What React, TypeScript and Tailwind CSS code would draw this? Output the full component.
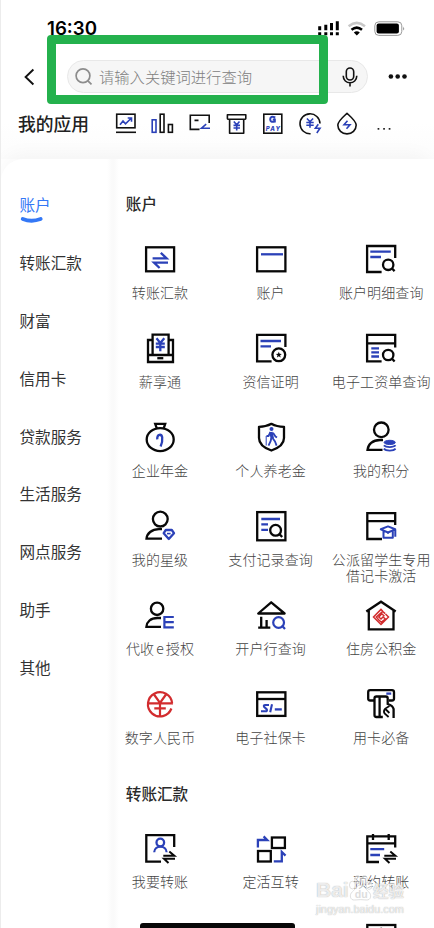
import React from 'react';

const BLUE = '#2b41b8';
const RED = '#d22c2e';

type IconProps = { children: React.ReactNode };

function Glyph({ children }: IconProps) {
  return (
    <svg className="block h-9 w-9 shrink-0 overflow-visible" viewBox="0 0 36 36" fill="none" stroke="#080808" strokeWidth="2.3">
      {children}
    </svg>
  );
}

function SmallGlyph({ children }: IconProps) {
  return (
    <svg className="block h-6 w-6 shrink-0 overflow-visible" viewBox="0 0 24 24" fill="none" stroke="#111" strokeWidth="1.6">
      {children}
    </svg>
  );
}

const Swap = () => (
  <g strokeWidth="2">
    <path d="M21.3 24.7H32.3L27.3 20.6M33 27.7H22L26.5 32" />
  </g>
);

const icons: Record<string, React.ReactNode> = {
  transfer: (
    <>
      <rect x="4.1" y="5.3" width="28" height="24" />
      <path stroke={BLUE} d="M10.6 16.3H24.6L18.8 10.8M26 20.6H12L17.6 26" />
    </>
  ),
  account: (
    <>
      <rect x="4.1" y="5.3" width="28.3" height="24" />
      <path stroke={BLUE} d="M8 12.3H30" />
    </>
  ),
  detail: (
    <>
      <path d="M32.2 16V4H4.1V30H18.6" />
      <path stroke={BLUE} d="M7.3 9.7H27.8M7.3 15H18" />
      <circle cx="25.2" cy="22.8" r="5.2" />
      <path d="M28.8 26.3L31.6 29.1" />
    </>
  ),
  salary: (
    <>
      <path d="M10.6 23.5V3.7H26.6V23.5M10 9H6V31H31V9H27M6 24H31" />
      <path d="M15.3 27.2H21.3" />
      <path stroke={BLUE} d="M14.5 7.2L18.3 12L22.3 7.2M13.8 12.6H22.8M13.8 16H22.8M18.3 12V20.3" />
    </>
  ),
  credit: (
    <>
      <path d="M32.4 16V3.8H4.1V30.3H18.6" />
      <path stroke={BLUE} d="M7.5 10H28M7.5 15.3H18" />
      <circle cx="25.8" cy="23.8" r="6.4" />
      <path fill="#080808" stroke="none" d="M25.8 20.8L26.6 22.8L28.8 22.9L27.1 24.3L27.7 26.5L25.8 25.2L23.9 26.5L24.5 24.3L22.8 22.9L25 22.8Z" />
    </>
  ),
  payslip: (
    <>
      <path d="M32.2 16.5V3.8H4.1V30.3H18.6M4 12.4H32.5" />
      <path stroke={BLUE} d="M8.3 17.4H16M8.3 21.4H16M8.3 25.5H16" />
      <circle cx="25.2" cy="24" r="5.2" />
      <path d="M28.8 27.5L31.6 30.5" />
    </>
  ),
  annuity: (
    <>
      <path d="M14.8 8.3L13.2 3.8H23.2L21.7 8.3" />
      <ellipse cx="18.2" cy="19.6" rx="13.5" ry="11.5" />
      <path stroke={BLUE} strokeWidth="2.3" d="M15.2 19.4C15 13.5 19.5 13.8 20.2 17.3C20.6 20.6 20.2 23 18.6 26.5" />
    </>
  ),
  pension: (
    <>
      <path strokeLinejoin="round" d="M18.4 3.8C14.5 6 10.5 6.8 6 6.8V18C6 25.5 13.5 28.8 18.4 30.5C23.3 28.8 31 25.5 31 18V6.8C26.5 6.8 22.3 6 18.4 3.8Z" />
      <circle cx="18.5" cy="9" r="2" fill={BLUE} stroke="none" />
      <path stroke={BLUE} strokeWidth="3.4" d="M18 12L19.3 18.5" />
      <path stroke={BLUE} strokeWidth="1.8" d="M17.5 12L15.5 16H13.5M20 12.8L22.5 16.5L24 17.5M18.3 18L17.7 21L15.5 25.6M19.5 18L22 21.5L23.6 25.6" />
      <path stroke={BLUE} strokeWidth="1" d="M13.2 25.5V16" />
    </>
  ),
  points: (
    <>
      <circle cx="18.3" cy="9.8" r="7.3" />
      <path d="M20 20H17C9.5 20 5 24.5 4.5 29.8H19.5" />
      <ellipse cx="26.7" cy="22.4" rx="5.6" ry="2.1" fill={BLUE} stroke={BLUE} strokeWidth="1" />
      <path stroke={BLUE} strokeWidth="1.7" d="M20.8 25.3C23 27.6 30.5 27.6 32.6 25.3M20.8 28.6C23 31.2 30.5 31.2 32.6 28.6" />
    </>
  ),
  star: (
    <>
      <circle cx="18.3" cy="10.1" r="7.4" />
      <path d="M20 20.2H17C9.5 20.2 5 24.5 4.5 29.6H20" />
      <path stroke={BLUE} strokeLinejoin="round" d="M23.8 21H29.8L32 24.2L26.8 30L21.7 24.2Z" />
      <path stroke={BLUE} strokeWidth="1.6" d="M25 24.6H28.6" />
    </>
  ),
  payments: (
    <>
      <rect x="4.2" y="3.1" width="28.2" height="28.2" />
      <path stroke={BLUE} d="M8.3 10H27M8.3 15.4H15M8.3 20.8H15" />
      <circle cx="22.6" cy="21.3" r="5.4" />
      <path d="M26.2 24.9L29.2 28" />
    </>
  ),
  student: (
    <>
      <path d="M32.2 16V4.2H4.3V30H19M4.3 12.2H32.2" />
      <path stroke={BLUE} strokeWidth="2" strokeLinejoin="round" d="M17.8 20.3L25 17.4L32.2 20.3L25 23.5ZM20.5 22V28.8H29.8V22M32.3 20.5V27.8" />
      <path stroke={BLUE} strokeWidth="1.2" d="M25 23.5V25" />
    </>
  ),
  authorize: (
    <>
      <circle cx="15.1" cy="10.8" r="6.2" />
      <path d="M19 20H15.5C8.5 20 4.8 24 4.4 28.8H19" />
      <path stroke={BLUE} strokeWidth="2.2" d="M31.8 19H22.4V29.4H31.8M22.4 24.2H31.8" />
    </>
  ),
  branch: (
    <>
      <path strokeLinejoin="round" d="M18.2 4.3L31.6 15.5H5.2Z" />
      <path d="M8.2 18.7V29.6M13.6 22V29.6M5.2 29.6H17.3" />
      <circle cx="25.6" cy="24.5" r="5.4" stroke={BLUE} strokeWidth="2.2" />
      <path stroke={BLUE} strokeWidth="2.2" d="M28.8 27.6L32 31" />
    </>
  ),
  housing: (
    <>
      <path d="M3.3 13.5L18 3.7L32.7 13.5M5.8 12V31.3H30.5V12" />
      <path stroke={RED} strokeWidth="1.5" d="M19.8 13.2L18 11.4L10.5 19L18 26.5L25.5 19L22.5 16M22.2 15.6L19.6 13.4L13.3 19L15 20.8M21.5 18.2L18.8 15.8L15.8 19L18 21L20 19L22.4 21L18.4 24.2L14.8 21" />
    </>
  ),
  digital: (
    <path stroke={RED} strokeWidth="2.2" d="M30.1 16.3A12.1 12.1 0 1 0 29.4 21.5M5.8 16.3H31M12 7.5L18 15.8L24 7.5M18 16V29M12.3 21.4H23.8" />
  ),
  social: (
    <>
      <rect x="4.2" y="5.3" width="28.2" height="23.6" />
      <path d="M4 12H32.5" />
      <path stroke={BLUE} d="M21.8 22.4H28.8" />
      <path stroke={BLUE} strokeWidth="2.1" d="M16 18H12.2Q10.4 18 11 19.7L13.8 22.4Q14.5 24.3 12.4 24.3H8M19 17.2L17.2 25.2" />
    </>
  ),
  cards: (
    <>
      <path strokeLinejoin="round" d="M11 13.5H7.2Q5.2 13.5 5.2 11.5V5.2Q5.2 3.2 7.2 3.2H29Q31 3.2 31 5.2V11.5Q31 13.5 29 13.5H26" />
      <path d="M19.8 30H13.4Q11.5 30 11.5 28V11.5Q11.5 9.5 13.4 9.5H22.8Q24.7 9.5 24.7 11.5V17Q29.8 18.5 30.6 22V31M16.6 9V30" />
      <path d="M26.5 19L22.3 21.6Q20 24 21.6 26.4L25.6 30M22.4 22L26.4 26" strokeWidth="1.8" />
      <path stroke={BLUE} d="M23.3 6.6H28.2" />
    </>
  ),
  send: (
    <>
      <path d="M32.2 16V4.2H4.3V30.6H19" />
      <circle cx="18.3" cy="11.5" r="3.8" stroke={BLUE} />
      <path stroke={BLUE} strokeWidth="2.2" d="M12.2 21.3C12.4 13.8 24.4 13.8 24.6 21.3" />
      <Swap />
    </>
  ),
  convert: (
    <>
      <rect x="18.9" y="6.5" width="13" height="10.5" />
      <rect x="5" y="20" width="12.8" height="10.5" />
      <path stroke={BLUE} d="M4.9 16.5V9H14.2L10.6 5.4M20.8 30.4H28.8V21L32.5 24.6" />
    </>
  ),
  schedule: (
    <>
      <path d="M32.2 16.5V5.3H4.3V31H16M4.3 12.3H32.2M10 3V9M25.7 3V9" />
      <path stroke={BLUE} d="M7.3 18.2H21.2M7.3 24H17" />
      <Swap />
    </>
  ),
  next: (
    <>
      <rect x="4.3" y="5" width="28" height="24" />
      <path d="M16 9.5L18.2 7.8L20.4 9.5" strokeWidth="1.2" stroke="#999" />
    </>
  ),
};

const accountItems: [string, React.ReactNode][] = [
  ['transfer', '转账汇款'], ['account', '账户'], ['detail', '账户明细查询'],
  ['salary', '薪享通'], ['credit', '资信证明'], ['payslip', '电子工资单查询'],
  ['annuity', '企业年金'], ['pension', '个人养老金'], ['points', '我的积分'],
  ['star', '我的星级'], ['payments', '支付记录查询'], ['student', '公派留学生专用\n借记卡激活'],
  ['authorize', <>代收<span className="mr-0.5 ml-[2px]">e</span>授权</>], ['branch', '开户行查询'], ['housing', '住房公积金'],
  ['digital', '数字人民币'], ['social', '电子社保卡'], ['cards', '用卡必备'],
];

const transferItems: [string, React.ReactNode][] = [
  ['send', '我要转账'], ['convert', '定活互转'], ['schedule', '预约转账'],
  ['', ''], ['', ''], ['next', ''],
];

const categories = ['账户', '转账汇款', '财富', '信用卡', '贷款服务', '生活服务', '网点服务', '助手', '其他'];

function ServiceGrid({ items }: { items: [string, React.ReactNode][] }) {
  return (
    <div className="-ml-[0.3px] grid w-[331.8px] auto-rows-[89px] grid-cols-3">
      {items.map(([icon, label], i) => (
        <div key={i} className="flex flex-col items-center gap-1.5">
          <Glyph>{icons[icon]}</Glyph>
          <span className="text-center text-[14px] leading-4 font-light tracking-[0.1px] whitespace-pre text-[#444]">{label}</span>
        </div>
      ))}
    </div>
  );
}

function StatusBar() {
  return (
    <div className="flex h-[60px] items-start justify-between pt-[18px] pr-[29px] pl-[47px]">
      <span className="font-['Inter'] text-[18.7px] leading-[22px] font-semibold text-black">16:30</span>
      <svg className="mt-[3px] h-[15px] w-[87px]" viewBox="318 21 87 15" fill="#000">
        <path d="M318.2 26.3h3v3.9h-3zM324.3 24.7h3v5.5h-3zM330 23h3v7.2h-3zM335.8 21.2h3v9h-3zM318.2 32.3h3v3h-3zM324.3 32.3h3v3h-3zM330 32.3h3v3h-3zM335.8 32.3h3v3h-3z" />
        <path d="M348.6 26.2Q356.8 19.6 365 26.2" fill="none" stroke="#c8c8c8" strokeWidth="2.5" />
        <path d="M351.5 29.8Q356.8 25.4 362 29.8" fill="none" stroke="#000" strokeWidth="2.5" />
        <path d="M353.8 32.4Q356.8 30 359.8 32.4L356.8 35.4Z" />
        <rect x="374.8" y="21.8" width="27" height="13.6" rx="4" fill="none" stroke="#999" />
        <rect x="376.6" y="23.6" width="22.3" height="10" rx="2" />
        <path d="M403.2 26.5Q405 28.5 403.2 30.5Z" fill="#888" />
      </svg>
    </div>
  );
}

function SearchRow() {
  return (
    <div className="flex h-[33px] items-center pr-[26px] pl-6">
      <svg className="h-[18px] w-3" viewBox="0 0 12 18" fill="none" stroke="#111" strokeWidth="1.9">
        <path d="M9.4 1.5L1.6 9L9.4 16.5" />
      </svg>
      <div className="ml-[31px] flex h-[33px] w-[301px] items-center rounded-full border border-[#e8e8e8] bg-[#f6f6f6] pr-[9px] pl-[7px]">
        <svg className="h-[18px] w-[18px]" viewBox="0 0 18 18" fill="none" stroke="#8c8c8c" strokeWidth="1.7">
          <circle cx="8" cy="7.8" r="6.9" />
          <path d="M12.9 12.8L16.5 16.4" />
        </svg>
        <span className="-mt-0.5 ml-1.5 flex-1 text-[15.3px] leading-5 font-light whitespace-nowrap text-[#808080]">请输入关键词进行查询</span>
        <svg className="h-5 w-4" viewBox="0 0 16 20" fill="none" stroke="#111" strokeWidth="1.6">
          <rect x="4.3" y="1" width="7.4" height="12" rx="3.7" />
          <path d="M1.2 8.8C1.2 18 14.8 18 14.8 8.8M8 15.7V19.6" />
        </svg>
      </div>
      <svg className="ml-auto h-[5px] w-5" viewBox="0 0 20 5" fill="#111">
        <circle cx="2.9" cy="2.5" r="2.3" />
        <circle cx="9.7" cy="2.5" r="2.3" />
        <circle cx="16.5" cy="2.5" r="2.3" />
      </svg>
    </div>
  );
}

function MyApps() {
  return (
    <div className="flex h-[66px] items-start bg-[linear-gradient(180deg,#fff_30px,#fcfcfc_66px)] pt-[19px] pl-[18px]">
      <span className="-mt-px w-24 text-[17.8px] leading-6 font-medium text-[#222]">我的应用</span>
      <div className="flex gap-[12.85px]">
        <SmallGlyph>
          <rect x="2.7" y="2.2" width="18.3" height="13.6" />
          <path d="M2 20.3H22" />
          <path stroke={BLUE} d="M6 12.7L9 9L11.5 11.8L17.2 6.2M13.7 6H17.5V9.7" />
        </SmallGlyph>
        <SmallGlyph>
          <rect stroke={BLUE} x="1.2" y="7.8" width="3.8" height="12.5" />
          <rect x="9.2" y="2.2" width="3.8" height="18.1" />
          <rect x="17.4" y="12.5" width="4" height="7.8" />
        </SmallGlyph>
        <SmallGlyph>
          <path d="M21.2 11V3.3H2.3V17.4H11.5M6.5 8.4H10.5" />
          <path stroke={BLUE} d="M22 16.2H13.5L18.2 12.2" />
        </SmallGlyph>
        <SmallGlyph>
          <path strokeLinejoin="round" d="M4.6 7.2H3Q2.4 7.2 2.4 6.6V2.7H20.8V6.6Q20.8 7.2 20.2 7.2H18.7M4.6 7.2H18.7M4.6 7.2V21.2H18.7V7.2" />
          <path stroke={BLUE} d="M8.8 9.5L11.7 12.8L14.5 9.5M8.5 13.4H15M8.5 16H15M11.7 13V18.5" />
        </SmallGlyph>
        <SmallGlyph>
          <rect x="2.8" y="2.2" width="18" height="19" />
          <path stroke={BLUE} strokeWidth="2" d="M14.3 5.5Q9.2 3.6 9.2 7.3Q9.2 10.7 13.8 9.6V7.5H11.8" />
          <text x="4.8" y="18.8" textLength="14.2" fill={BLUE} stroke="none" fontFamily="Inter" fontSize="6" fontWeight="800" fontStyle="italic">PAY</text>
        </SmallGlyph>
        <SmallGlyph>
          <path d="M22 11.5A10 10 0 1 0 12.6 21.8" />
          <path stroke={BLUE} d="M8.9 6.5L12 9.7L15.1 6.5M8.3 10.5H15.7M8.3 13.2H15.7M12 10V15.8M20.3 12.3L17.4 16.3H22L18.8 21" />
        </SmallGlyph>
        <SmallGlyph>
          <path strokeLinejoin="round" d="M12 1.3C9.7 3.5 2.8 9 2.8 13.1A9.2 8.8 0 0 0 21.2 13.1C21.2 9 14.3 3.5 12 1.3Z" />
          <path stroke={BLUE} d="M12.5 8.7L9 12.8H15L11.5 16.8" />
        </SmallGlyph>
      </div>
      <svg className="mt-[15px] ml-[18px] h-1 w-4" viewBox="0 0 16 4" fill="#222">
        <rect x="0.6" y="1" width="1.7" height="1.7" />
        <rect x="6.2" y="1" width="1.7" height="1.7" />
        <rect x="11.7" y="1" width="1.7" height="1.7" />
      </svg>
    </div>
  );
}

function Watermark() {
  return (
    <div className="absolute top-[873px] left-[315px] flex w-[92px] flex-col font-['Liberation_Sans'] font-bold text-white/80 [text-shadow:0_0_1px_#999]">
      <div className="flex h-[29px] items-end">
        <span className="w-8 text-[21px] leading-6">Bai</span>
        <svg className="h-[29px] w-[25px] shrink-0" viewBox="0 0 26 29" fill="#fff" fillOpacity="0.5" stroke="#d0d0d0" strokeWidth="0.7">
          <ellipse cx="4.5" cy="12" rx="3" ry="4" />
          <ellipse cx="10" cy="6.5" rx="3" ry="4.3" />
          <ellipse cx="17" cy="6.5" rx="3" ry="4.3" />
          <ellipse cx="22" cy="12.5" rx="3" ry="4" />
          <path d="M13 12C9 12 8 16 4.5 19C1 22 2 28 7 27.5C11 27 15 27 19 27.5C24 28 25 22 21.5 19C18 16 17 12 13 12Z" />
          <text x="7" y="25" fill="#ddd" fillOpacity="1" stroke="none" fontFamily="Liberation Sans" fontSize="11" style={{ textShadow: 'none' }}>du</text>
        </svg>
        <span className="font-['Noto_Sans_CJK_SC'] text-[15.5px] leading-6 whitespace-nowrap">经验</span>
      </div>
      <span className="mt-px text-[10.9px] leading-3 font-normal whitespace-nowrap">jingyan.baidu.com</span>
    </div>
  );
}

export default function App() {
  return (
    <div className="relative flex h-[928px] w-[434px] flex-col overflow-hidden border-l border-[#ececec] bg-white font-['Noto_Sans_CJK_SC',sans-serif]">
      <div className="-ml-px flex flex-col">
        <StatusBar />
        <SearchRow />
        <MyApps />
      </div>
      <div className="flex min-h-0 flex-1 rounded-tl-[22px] rounded-tr-[22px] bg-white shadow-[0_-6px_18px_rgba(0,0,0,0.03)]">
        <nav className="flex w-[104px] shrink-0 flex-col pt-[15px] pl-[18.5px]">
          {categories.map((name, i) => (
            <div key={name} className={i === 0 ? 'flex h-[57.9px] flex-col pt-5 text-[#3478f6]' : 'flex h-[57.9px] flex-col pt-5 text-[#333]'}>
              <span className="text-[15.6px] leading-5 whitespace-nowrap">{name}</span>
              {i === 0 && (
                <svg className="mt-[3px] h-1.5 w-[23px] shrink-0 overflow-visible" viewBox="0 0 23 6" fill="none" stroke="#3478f6" strokeWidth="4" strokeLinecap="round">
                  <path d="M2.8 2Q11.5 5.4 20.6 2" />
                </svg>
              )}
            </div>
          ))}
        </nav>
        <main className="flex min-w-0 flex-1 flex-col bg-[linear-gradient(90deg,#fff_2px,#fafafa_7px,#fafafa_9px,#fff_14px)]">
          <h2 className="mt-[33px] mb-7 pl-[20.8px] text-[15.6px] leading-[22px] font-medium text-[#2a2a2a]">账户</h2>
          <ServiceGrid items={accountItems} />
          <h2 className="mt-1.5 mb-[27px] pl-[20.8px] text-[15.6px] leading-[22px] font-medium text-[#2a2a2a]">转账汇款</h2>
          <ServiceGrid items={transferItems} />
        </main>
      </div>
      <div className="absolute top-[35px] left-[46px] h-[69px] w-[281px] rounded-[4px] border-[9px] border-[#24b14d]" />
      <div className="absolute top-[923px] left-[139px] h-2 w-[155px] rounded-[3px] bg-[#080808]" />
      <Watermark />
    </div>
  );
}
